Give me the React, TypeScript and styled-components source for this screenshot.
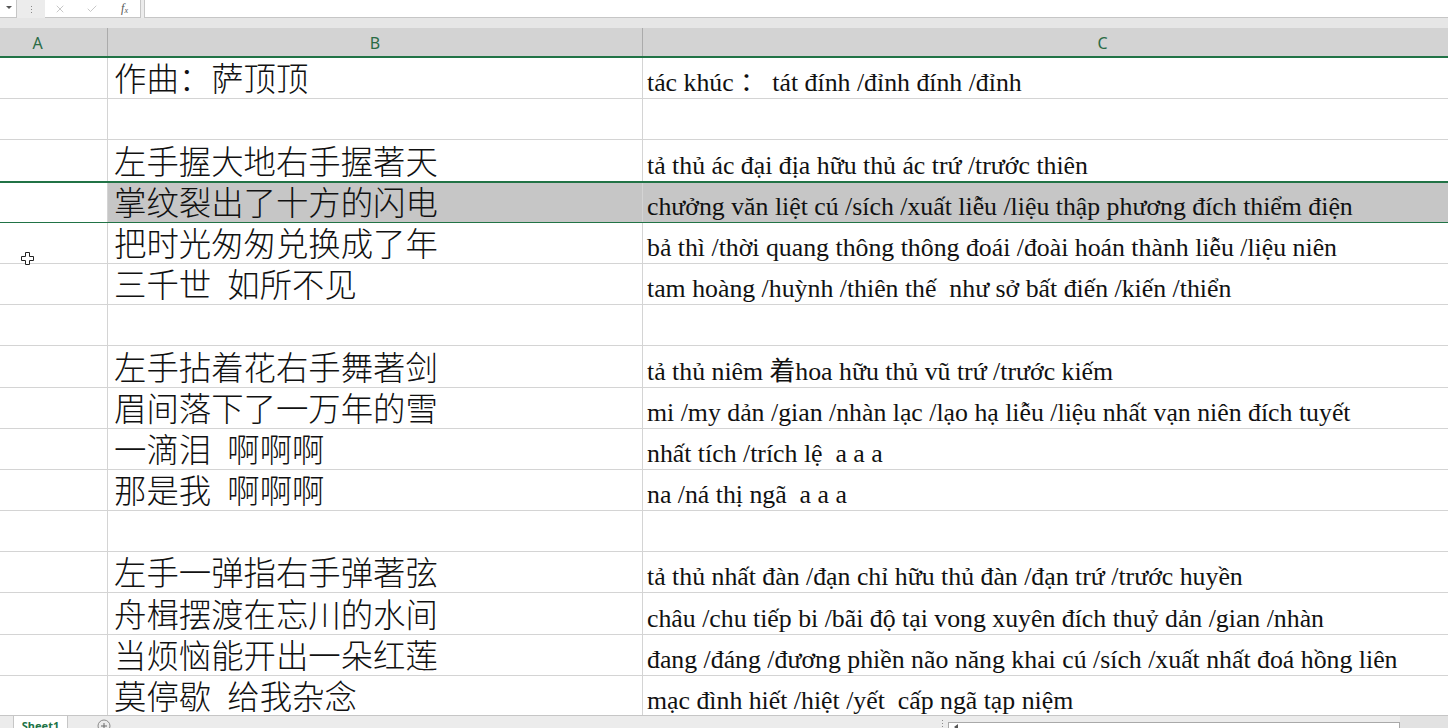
import React from 'react';
import styled, { createGlobalStyle } from 'styled-components';
import { X, Check } from 'lucide-react';

const Global = createGlobalStyle`
  html, body { margin: 0; padding: 0; background: #fff; overflow: hidden; }
  #root { width: 1448px; height: 728px; }
`;

const GREEN = '#217346';
const GRID = '#d4d4d4';

const Frame = styled.div`
  width: 1448px;
  height: 728px;
  display: flex;
  flex-direction: column;
  overflow: hidden;
  position: relative;
  background: #fff;
`;

const TopArea = styled.div`
  flex: none;
  height: 28px;
  background: #e6e6e6;
  display: flex;
  flex-direction: column;
`;

const FormulaBar = styled.div`
  height: 18px;
  display: flex;
  background: #ececec;
`;

const NameBox = styled.div`
  width: 17px;
  background: #fff;
  border-right: 1px solid #c6c6c6;
  border-bottom: 1px solid #c6c6c6;
  box-sizing: border-box;
  display: flex;
  align-items: center;
  justify-content: flex-end;
  padding-right: 4px;
`;

const Caret = styled.div`
  width: 0;
  height: 0;
  border-left: 3px solid transparent;
  border-right: 3px solid transparent;
  border-top: 3px solid #555;
  margin-top: -2px;
`;

const Grip = styled.div`
  width: 28px;
  display: flex;
  flex-direction: column;
  align-items: center;
  justify-content: center;
  gap: 2px;
  & > span {
    width: 1px;
    height: 1px;
    background: #8a8a8a;
  }
`;

const FxBox = styled.div`
  width: 96px;
  background: #fff;
  border-bottom: 1px solid #c6c6c6;
  border-right: 1px solid #c6c6c6;
  box-sizing: border-box;
  display: grid;
  grid-template-columns: 30px 33px 33px;
  align-items: center;
  justify-items: center;
`;

const Fx = styled.span`
  font-family: "Liberation Serif", serif;
  font-style: italic;
  font-size: 12px;
  color: #555;
  & sub { font-size: 8px; vertical-align: -1px; }
`;

const FormulaInput = styled.div`
  flex: 1;
  margin-left: 3px;
  background: #fff;
  border-left: 1px solid #c6c6c6;
  border-bottom: 1px solid #c6c6c6;
`;

const Columns = `
  display: grid;
  grid-template-columns: 140px 535px 920px;
  margin-left: -32px;
`;

const HeaderRow = styled.div`
  ${Columns}
  flex: none;
  height: 30px;
  box-sizing: border-box;
  background: #d3d3d3;
  border-bottom: 2px solid ${GREEN};
`;

const HeaderCell = styled.div`
  border-right: 1px solid #ababab;
  display: flex;
  align-items: center;
  justify-content: center;
  font-family: "Noto Sans", "Liberation Sans", sans-serif;
  font-size: 16px;
  color: #2a6b45;
  padding-top: 1px;
`;

const Body = styled.div`
  flex: 1;
  overflow: hidden;
  display: flex;
  flex-direction: column;
`;

const Row = styled.div<{ $selected?: boolean }>`
  ${Columns}
  flex: none;
  height: 41.2px;
  position: relative;
  &::after {
    content: '';
    display: ${p => (p.$selected ? 'block' : 'none')};
    position: absolute;
    left: 0;
    right: 0;
    top: -1px;
    bottom: -1px;
    border-top: 2px solid ${GREEN};
    border-bottom: 2px solid ${GREEN};
    pointer-events: none;
  }
`;

const Cell = styled.div<{ $shaded?: boolean }>`
  box-sizing: border-box;
  border-right: 1px solid ${GRID};
  border-bottom: 1px solid ${GRID};
  background: ${p => (p.$shaded ? '#c6c6c6' : '#fff')};
  display: flex;
  align-items: flex-end;
  overflow: hidden;
  white-space: pre;
`;

const HanCell = styled(Cell)`
  font-family: "Noto Sans CJK SC", sans-serif;
  font-weight: 300;
  font-size: 32.4px;
  line-height: 32px;
  word-spacing: 9px;
  color: #111;
  padding-left: 6px;
  padding-bottom: 5px;
`;

const VietCell = styled(Cell)`
  font-family: "Liberation Serif", "Noto Sans CJK SC", serif;
  font-size: 25.8px;
  line-height: 28px;
  color: #111;
  padding-left: 4px;
  padding-bottom: 1px;
`;

const SheetBar = styled.div`
  flex: none;
  height: 13px;
  box-sizing: border-box;
  border-top: 1px solid #c6c6c6;
  background: #ececec;
  display: flex;
  align-items: flex-start;
  overflow: hidden;
`;

const Tab = styled.div`
  margin-left: 13px;
  width: 55px;
  height: 20px;
  box-sizing: border-box;
  background: #fff;
  border-left: 1px solid #c6c6c6;
  border-right: 1px solid #c6c6c6;
  display: flex;
  justify-content: center;
  padding-top: 3px;
  font-family: "Noto Sans", "Liberation Sans", sans-serif;
  font-weight: 700;
  font-size: 11px;
  line-height: 14px;
  color: ${GREEN};
`;

const AddSheet = styled.div`
  margin-left: 29px;
  margin-top: 3px;
  display: flex;
`;

const Spacer = styled.div`
  flex: 1;
`;

const ScrollGrip = styled.div`
  width: 12px;
  display: flex;
  flex-direction: column;
  align-items: center;
  gap: 2px;
  padding-top: 4px;
  & > span { width: 1px; height: 1px; background: #8a8a8a; }
`;

const HScroll = styled.div`
  width: 452px;
  height: 12px;
  margin-top: 6px;
  box-sizing: border-box;
  background: #fff;
  border: 1px solid #a9a9a9;
  display: flex;
  align-items: flex-start;
  padding-left: 5px;
`;

const ScrollArrow = styled.div`
  width: 0;
  height: 0;
  margin-top: 1px;
  border-top: 3px solid transparent;
  border-bottom: 3px solid transparent;
  border-right: 4px solid #555;
`;

const RightCorner = styled.div`
  width: 48px;
  align-self: stretch;
  background: #e2e2e2;
`;

const Cursor = styled.svg`
  position: absolute;
  left: 21px;
  top: 252px;
`;

type Line = { han: string; viet: string; selected?: boolean };

const lines: Line[] = [
  { han: '作曲：萨顶顶', viet: 'tác khúc ： tát đính /đỉnh đính /đỉnh' },
  { han: '', viet: '' },
  { han: '左手握大地右手握著天', viet: 'tả thủ ác đại địa hữu thủ ác trứ /trước thiên' },
  { han: '掌纹裂出了十方的闪电', viet: 'chưởng văn liệt cú /sích /xuất liễu /liệu thập phương đích thiểm điện', selected: true },
  { han: '把时光匆匆兑换成了年', viet: 'bả thì /thời quang thông thông đoái /đoài hoán thành liễu /liệu niên' },
  { han: '三千世 如所不见', viet: 'tam hoàng /huỳnh /thiên thế  như sở bất điến /kiến /thiển' },
  { han: '', viet: '' },
  { han: '左手拈着花右手舞著剑', viet: 'tả thủ niêm 着hoa hữu thủ vũ trứ /trước kiếm' },
  { han: '眉间落下了一万年的雪', viet: 'mi /my dản /gian /nhàn lạc /lạo hạ liễu /liệu nhất vạn niên đích tuyết' },
  { han: '一滴泪 啊啊啊', viet: 'nhất tích /trích lệ  a a a' },
  { han: '那是我 啊啊啊', viet: 'na /ná thị ngã  a a a' },
  { han: '', viet: '' },
  { han: '左手一弹指右手弹著弦', viet: 'tả thủ nhất đàn /đạn chỉ hữu thủ đàn /đạn trứ /trước huyền' },
  { han: '舟楫摆渡在忘川的水间', viet: 'châu /chu tiếp bi /bãi độ tại vong xuyên đích thuỷ dản /gian /nhàn' },
  { han: '当烦恼能开出一朵红莲', viet: 'đang /đáng /đương phiền não năng khai cú /sích /xuất nhất đoá hồng liên' },
  { han: '莫停歇 给我杂念', viet: 'mạc đình hiết /hiệt /yết  cấp ngã tạp niệm' },
];

export default function App() {
  return (
    <Frame>
      <Global />
      <TopArea>
        <FormulaBar>
          <NameBox><Caret /></NameBox>
          <Grip><span /><span /><span /></Grip>
          <FxBox>
            <X size={12} color="#b5b5b5" strokeWidth={1.5} />
            <Check size={12} color="#b5b5b5" strokeWidth={1.5} />
            <Fx>f<sub>x</sub></Fx>
          </FxBox>
          <FormulaInput />
        </FormulaBar>
      </TopArea>
      <HeaderRow>
        <HeaderCell>A</HeaderCell>
        <HeaderCell>B</HeaderCell>
        <HeaderCell>C</HeaderCell>
      </HeaderRow>
      <Body>
        {lines.map((l, i) => (
          <Row key={i} $selected={l.selected}>
            <Cell />
            <HanCell $shaded={l.selected}>{l.han}</HanCell>
            <VietCell $shaded={l.selected}>{l.viet}</VietCell>
          </Row>
        ))}
      </Body>
      <SheetBar>
        <Tab>Sheet1</Tab>
        <AddSheet>
          <svg width="14" height="14" viewBox="0 0 14 14">
            <circle cx="7" cy="7" r="6" fill="none" stroke="#8a8a8a" strokeWidth="1" />
            <path d="M7 4v6M4 7h6" stroke="#6a6a6a" strokeWidth="1" />
          </svg>
        </AddSheet>
        <Spacer />
        <ScrollGrip><span /><span /><span /></ScrollGrip>
        <HScroll><ScrollArrow /></HScroll>
        <RightCorner />
      </SheetBar>
      <Cursor width="13" height="13" viewBox="0 0 13 13">
        <path d="M4.5 0.5h4v4h4v4h-4v4h-4v-4h-4v-4h4z" fill="#fff" stroke="#222" strokeWidth="1" />
      </Cursor>
    </Frame>
  );
}
